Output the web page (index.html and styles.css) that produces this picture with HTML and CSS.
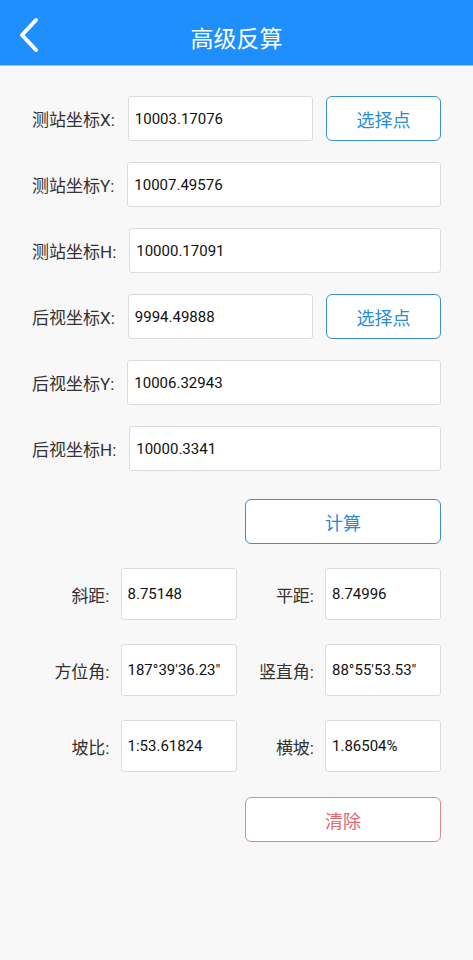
FILE: index.html
```html
<!DOCTYPE html>
<html lang="zh-CN">
<head>
    <meta charset="UTF-8">
    <meta name="viewport" content="width=device-width, initial-scale=1.0">
    <title>高级反算</title>
    <link rel="stylesheet" href="styles.css">
</head>
<body>
    <div class="topbar">
        <span class="back">
            <svg width="24" height="40" viewBox="0 0 24 40">
                <path d="M18 4 L4 19 L18 34" fill="none" stroke="#fff" stroke-width="4" stroke-linecap="round" stroke-linejoin="round"/>
            </svg>
        </span>
        <h1>高级反算</h1>
    </div>

    <div class="content">
        <div class="row">
            <label>测站坐标X:</label>
            <input class="field short" type="text" value="10003.17076">
            <button class="btn pick">选择点</button>
        </div>
        <div class="row">
            <label>测站坐标Y:</label>
            <input class="field" type="text" value="10007.49576">
        </div>
        <div class="row">
            <label>测站坐标H:</label>
            <input class="field" type="text" value="10000.17091">
        </div>
        <div class="row">
            <label>后视坐标X:</label>
            <input class="field short" type="text" value="9994.49888">
            <button class="btn pick">选择点</button>
        </div>
        <div class="row">
            <label>后视坐标Y:</label>
            <input class="field" type="text" value="10006.32943">
        </div>
        <div class="row">
            <label>后视坐标H:</label>
            <input class="field" type="text" value="10000.3341">
        </div>

        <div class="actions">
            <button class="btn wide">计算</button>
        </div>

        <div class="results">
            <div class="cell"><label>斜距:</label><input class="out" type="text" value="8.75148"></div>
            <div class="cell"><label>平距:</label><input class="out" type="text" value="8.74996"></div>
            <div class="cell"><label>方位角:</label><input class="out" type="text" value="187°39'36.23&quot;"></div>
            <div class="cell"><label>竖直角:</label><input class="out" type="text" value="88°55'53.53&quot;"></div>
            <div class="cell"><label>坡比:</label><input class="out" type="text" value="1:53.61824"></div>
            <div class="cell"><label>横坡:</label><input class="out" type="text" value="1.86504%"></div>
        </div>

        <div class="actions clear-row">
            <button class="btn wide danger">清除</button>
        </div>
    </div>
</body>
</html>
```

FILE: styles.css
```css
body {
    margin: 0;
    padding: 0;
    background-color: #f8f8f8;
    font-family: Roboto, "Noto Sans CJK SC", sans-serif;
    color: #333;
}

.topbar {
    position: relative;
    height: 65px;
    background-color: #1e8ffd;
    border-bottom: 1px solid #8cc6fb;
    display: flex;
    align-items: center;
    justify-content: center;
}

.topbar .back {
    position: absolute;
    left: 18px;
    top: 16px;
}

.topbar h1 {
    margin: 8px 0 0;
    font-size: 23px;
    font-weight: normal;
    color: #fff;
}

.content {
    padding: 30px 32px 0 32px;
}

.row {
    display: flex;
    align-items: center;
    height: 45px;
    margin-bottom: 21px;
}

.row label {
    font-size: 17px;
    margin-right: 13px;
    white-space: nowrap;
}

.field {
    flex: 1;
    height: 45px;
    box-sizing: border-box;
    border: 1px solid #dcdcdc;
    border-radius: 3px;
    background-color: #fff;
    padding: 0 6px;
    font-family: Roboto, sans-serif;
    font-size: 15px;
    color: #111;
    outline: none;
}

.field.short {
    flex: none;
    width: 185px;
}

.btn {
    box-sizing: border-box;
    background-color: #fff;
    border: 1.5px solid #3d90cf;
    border-radius: 6px;
    color: #2a8cd6;
    font-family: "Noto Sans CJK SC", sans-serif;
    font-size: 18px;
    cursor: pointer;
}

.btn.pick {
    width: 115px;
    height: 45px;
    margin-left: auto;
}

.actions {
    display: flex;
    justify-content: flex-end;
    margin-top: 28px;
}

.btn.wide {
    width: 196px;
    height: 45px;
}

.btn.danger {
    border-color: #d98b8f;
    color: #e0686f;
}

.results {
    display: grid;
    grid-template-columns: 1fr 1fr;
    row-gap: 24px;
    margin-top: 24px;
}

.cell {
    display: flex;
    align-items: center;
    justify-content: flex-end;
}

.cell label {
    font-size: 17px;
    margin-right: 11px;
}

.out {
    width: 116px;
    height: 52px;
    box-sizing: border-box;
    border: 1px solid #dcdcdc;
    border-radius: 3px;
    background-color: #fff;
    padding: 0 6px;
    font-family: Roboto, sans-serif;
    font-size: 15px;
    color: #111;
    outline: none;
}

.clear-row {
    margin-top: 25px;
}
```
